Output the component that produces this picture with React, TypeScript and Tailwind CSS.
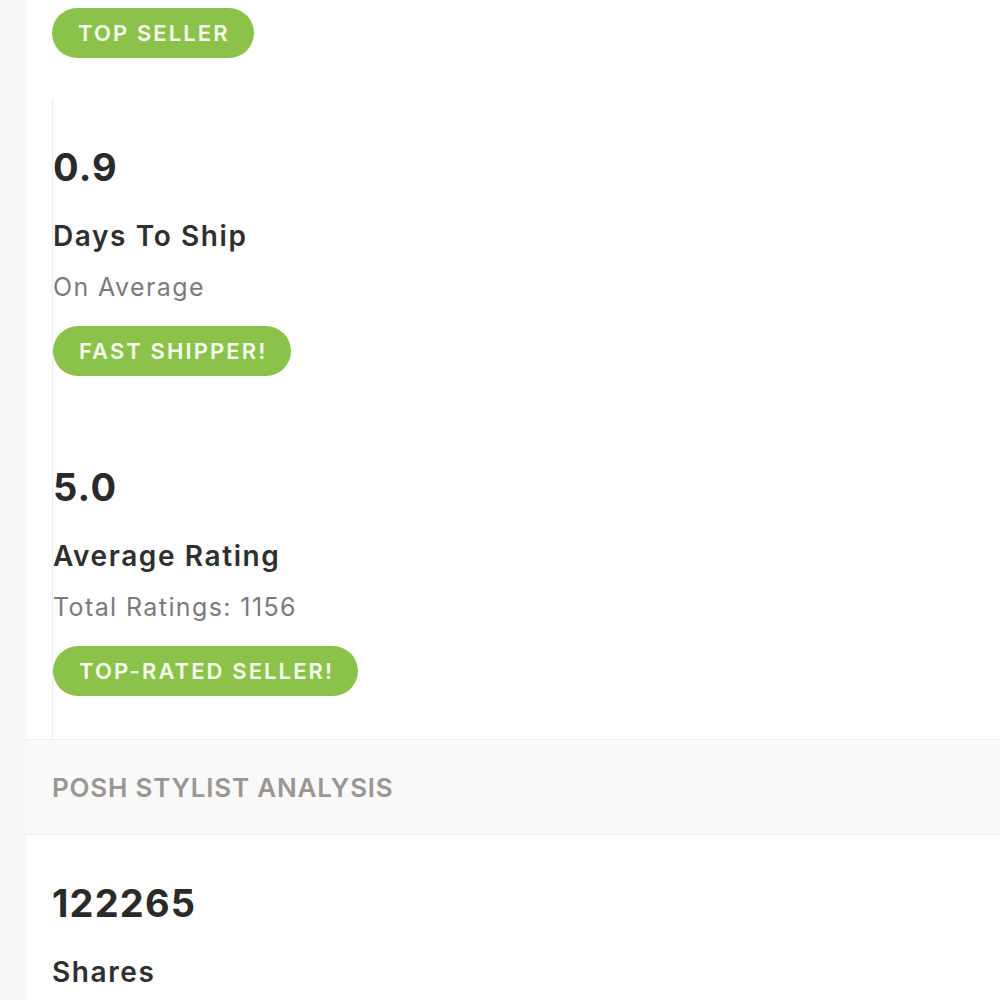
import React from "react";

const font = { fontFamily: "Inter, 'Open Sans', sans-serif" };

function Badge({ children }: { children: React.ReactNode }) {
  return (
    <div className="inline-flex h-[50px] items-center rounded-full bg-[#8bc34a] pl-[26px] pr-[24px] text-[22px] font-semibold uppercase tracking-[2.1px] text-[#f7fbef]">
      {children}
    </div>
  );
}

function Stat({ value, title, sub, badge }: { value: string; title: string; sub: string; badge: string }) {
  return (
    <div className="flex flex-col items-start pt-[44px] pb-[43px]">
      <div className="text-[38px] font-bold leading-[48px] tracking-[1.2px] text-[#2a2a2a]">{value}</div>
      <div className="mt-[27px] text-[28px] font-semibold leading-[36px] tracking-[1.6px] text-[#2f2f2f]">{title}</div>
      <div className="mt-[17px] text-[25px] leading-[32px] tracking-[1.4px] text-[#7b7b7b]">{sub}</div>
      <div className="mt-[23px]">
        <Badge>{badge}</Badge>
      </div>
    </div>
  );
}

export default function App() {
  return (
    <div className="flex min-h-[1000px] w-full bg-white" style={font}>
      <div className="w-[26px] shrink-0 bg-[#f7f7f7]" />
      <div className="flex flex-1 flex-col">
        <div className="px-[26px] pt-[8px]">
          <Badge>Top Seller</Badge>
          <div className="mt-[41px] border-l border-[#ececec]">
            <Stat value="0.9" title="Days To Ship" sub="On Average" badge="Fast Shipper!" />
            <Stat value="5.0" title="Average Rating" sub="Total Ratings: 1156" badge="Top-Rated Seller!" />
          </div>
        </div>
        <div className="flex h-[96px] items-center border-y border-[#eeeeee] bg-[#f9f9f9] px-[26px]">
          <span className="text-[26px] font-semibold uppercase tracking-[0.03em] text-[#9b9691]">Posh Stylist Analysis</span>
        </div>
        <div className="px-[26px] pt-[44px]">
          <div className="text-[38px] font-bold leading-[48px] tracking-[1.2px] text-[#2a2a2a]">122265</div>
          <div className="mt-[27px] text-[28px] font-semibold leading-[36px] tracking-[1.6px] text-[#2f2f2f]">Shares</div>
        </div>
      </div>
    </div>
  );
}
